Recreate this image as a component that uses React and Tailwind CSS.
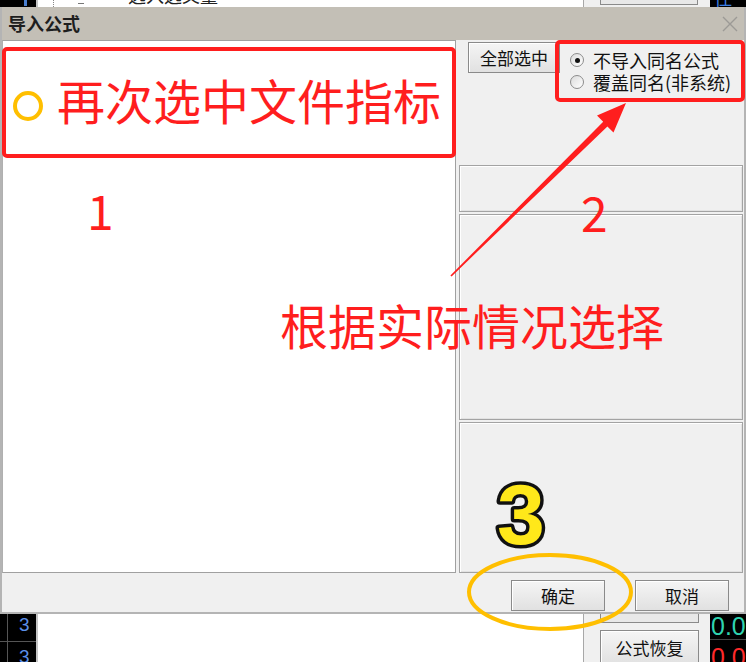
import React from 'react';

const cjk = "font-['Noto_Sans_CJK_SC','Noto_Sans',sans-serif]";

function Btn({ children, className = '' }) {
  return (
    <div
      className={`flex items-center justify-center border border-[#8a8a8a] bg-linear-to-b from-[#f5f5f5] to-[#e1e1e1] shadow-[inset_1px_1px_0_#ffffff] text-[17px] text-[#111] ${className}`}
    >
      {children}
    </div>
  );
}

function Radio({ checked, label }) {
  return (
    <div className="flex h-[22px] items-center gap-[9px]">
      <div className="flex h-[14px] w-[14px] items-center justify-center rounded-full border border-[#8c8c8c] bg-linear-to-br from-[#dcdcdc] to-white">
        {checked && <div className="h-[5px] w-[5px] rounded-full bg-[#111]" />}
      </div>
      <span className="text-[18px] leading-none text-[#111]">{label}</span>
    </div>
  );
}

function Panel({ className = '' }) {
  return (
    <div
      className={`border border-[#a3a3a3] bg-[#f0f0f0] shadow-[inset_1px_1px_0_#ffffff,inset_-1px_-1px_0_#e2e2e2] ${className}`}
    />
  );
}

function TopStrip() {
  return (
    <div className="flex h-[7px] overflow-hidden">
      <div className="relative w-[36px] bg-black">
        <div className="absolute left-[24px] top-0 h-[6px] w-[3px] bg-[#4a7fd0]" />
      </div>
      <div className="w-[2px] bg-[#c4c4c4]" />
      <div className="relative w-[545px] bg-white">
        <div className="absolute left-[15px] top-0 h-[7px] border-l border-dotted border-[#888]" />
        <div className="absolute left-[40px] top-[3px] h-[1px] w-[6px] bg-[#777]" />
        <div className="absolute -top-[14px] left-[90px] text-[18px] leading-none text-[#222]">
          选入选义量
        </div>
      </div>
      <div className="w-[1px] bg-[#a8a8a8]" />
      <div className="relative w-[126px] bg-[#f0f0f0]">
        <div className="absolute left-[16px] -top-[4px] h-[9px] w-[98px] border border-[#8a8a8a] bg-[#e8e8e8]" />
      </div>
      <div className="relative flex-1 bg-black">
        <div className="absolute left-[4px] -top-[12px] text-[18px] leading-none text-[#3b7de0]">
          住
        </div>
      </div>
    </div>
  );
}

function BottomStrip() {
  return (
    <div className="flex h-[48px] overflow-hidden">
      <div className="relative w-[36px] bg-black">
        <div className="absolute left-[7px] top-0 h-full w-[1px] bg-[#555]" />
        <div className="absolute left-0 top-[27px] h-[1px] w-full bg-[#555]" />
        <div className="absolute left-[19px] top-[1px] font-['Liberation_Sans',sans-serif] text-[19px] leading-none text-[#5b8fe8]">
          3
        </div>
        <div className="absolute left-[19px] top-[33px] font-['Liberation_Sans',sans-serif] text-[19px] leading-none text-[#5b8fe8]">
          3
        </div>
      </div>
      <div className="w-[2px] bg-[#c4c4c4]" />
      <div className="w-[545px] bg-white" />
      <div className="w-[1px] bg-[#a8a8a8]" />
      <div className="relative w-[126px] bg-[#f0f0f0]">
        <div className="absolute left-[16px] -top-[4px] h-[13px] w-[99px] border border-[#8a8a8a] bg-[#e8e8e8]" />
        <Btn className="absolute left-[16px] top-[16px] h-[36px] w-[99px]">公式恢复</Btn>
      </div>
      <div className="relative flex-1 bg-black font-['Liberation_Sans',sans-serif]">
        <div className="absolute left-[1px] top-0 text-[25px] leading-none text-[#2fd3b0]">0.0</div>
        <div className="absolute left-0 top-[25px] h-[1px] w-full bg-[#444]" />
        <div className="absolute left-[1px] top-[31px] text-[25px] leading-none text-[#ff2a2a]">0.0</div>
      </div>
    </div>
  );
}

function Dialog() {
  return (
    <div className="flex h-[607px] flex-col border-l-2 border-r-2 border-b-2 border-[#b4b4b4] bg-[#f0f0f0]">
      <div className="flex h-[33px] items-center justify-between bg-[#c3bfb6] pl-[6px] pr-[4px]">
        <span className="text-[18px] font-bold text-[#1e1e1e]">导入公式</span>
        <svg width="20" height="20" viewBox="0 0 20 20">
          <path d="M3 3 L17 17 M17 3 L3 17" stroke="#9c9a96" strokeWidth="1.4" fill="none" />
        </svg>
      </div>
      <div className="flex h-[533px]">
        <div className="w-[454px] border border-[#a0a0a0] border-l-[#b0b0b0] bg-white" />
        <div className="flex flex-1 flex-col pl-[3px] pr-[1px]">
          <div className="flex h-[125px] items-start">
            <Btn className="ml-[9px] mt-[2px] h-[31px] w-[92px]">全部选中</Btn>
            <div className="ml-[10px] mt-[9px] flex flex-col">
              <Radio checked label="不导入同名公式" />
              <Radio label="覆盖同名(非系统)" />
            </div>
          </div>
          <Panel className="h-[47px]" />
          <Panel className="mt-[2px] h-[206px]" />
          <Panel className="mt-[2px] flex-1" />
        </div>
      </div>
      <div className="flex flex-1 items-start justify-end gap-[30px] pr-[15px] pt-[7px]">
        <Btn className="h-[31px] w-[94px]">确定</Btn>
        <Btn className="h-[31px] w-[94px]">取消</Btn>
      </div>
    </div>
  );
}

function Annotations() {
  return (
    <div className="pointer-events-none absolute inset-0">
      <div className="absolute left-[2px] top-[47px] h-[111px] w-[454px] rounded-[5px] border-4 border-[#ff1e1e]" />
      <div className="absolute left-[555px] top-[40px] h-[62px] w-[190px] rounded-[5px] border-4 border-[#ff1e1e]" />
      <div className="absolute left-[57px] top-[75px] text-[48px] leading-none text-[#ff1e1e]">
        再次选中文件指标
      </div>
      <div className="absolute left-[87px] top-[185px] text-[48px] leading-none text-[#ff1e1e]">1</div>
      <div className="absolute left-[581px] top-[187px] text-[48px] leading-none text-[#ff1e1e]">2</div>
      <div className="absolute left-[280px] top-[300px] text-[48px] leading-none text-[#ff1e1e]">
        根据实际情况选择
      </div>
      <svg className="absolute left-0 top-0" width="746" height="662" viewBox="0 0 746 662">
        <circle cx="28" cy="106" r="13" fill="none" stroke="#ffbf00" strokeWidth="4" />
        <polygon
          points="451.6,276.4 607.4,126.4 613.5,132.5 626,103 597,115.5 603.2,121.8 450.4,275.4"
          fill="#ff1e1e"
        />
        <text
          x="497"
          y="544"
          fontFamily="Liberation Sans, sans-serif"
          fontWeight="bold"
          fontSize="86"
          fill="#ffe81a"
          stroke="#111"
          strokeWidth="7"
          strokeLinejoin="round"
          paintOrder="stroke"
        >
          3
        </text>
        <ellipse cx="550" cy="592" rx="81" ry="37" fill="none" stroke="#ffbf00" strokeWidth="4" />
      </svg>
    </div>
  );
}

export default function App() {
  return (
    <div className={`relative h-[662px] w-[746px] overflow-hidden bg-white ${cjk}`}>
      <TopStrip />
      <Dialog />
      <BottomStrip />
      <Annotations />
    </div>
  );
}
